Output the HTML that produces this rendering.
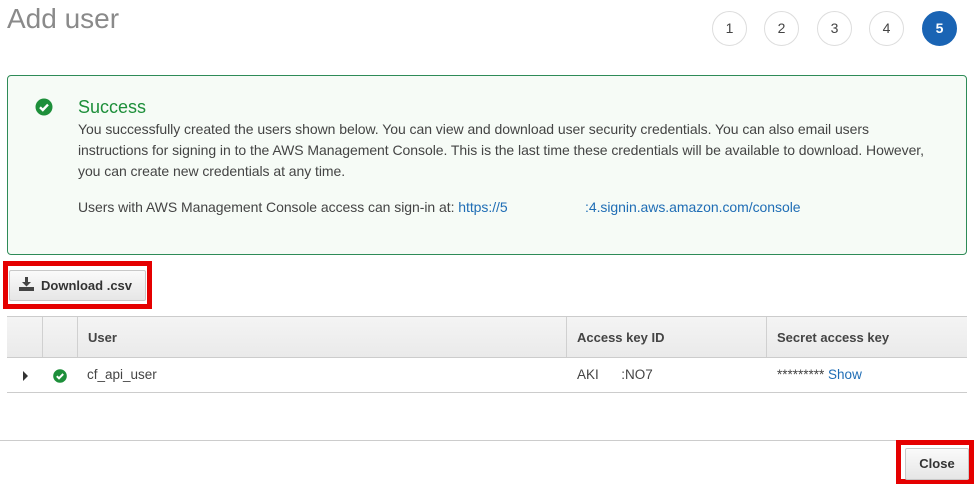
<!DOCTYPE html>
<html><head><meta charset="utf-8"><style>
*{box-sizing:border-box;margin:0;padding:0}
body{width:974px;height:487px;background:#fff;font-family:"Liberation Sans",Arial,sans-serif;color:#444;position:relative;overflow:hidden}
.abs{position:absolute}
h1{position:absolute;left:7px;top:3px;font-size:28px;font-weight:normal;color:#8a8a8a}
.c{position:absolute;top:11px;width:35px;height:35px;border-radius:50%;border:1px solid #ddd;text-align:center;line-height:33px;font-size:14px;color:#444}
.c.on{background:#1a64b4;border-color:#1a64b4;color:#fff;font-weight:bold}
.box{left:7px;top:75px;width:960px;height:180px;border:1px solid #2e8b57;border-radius:4px;background:#f6fbf6}
.t{position:absolute;left:78px;font-size:13px;color:#444;white-space:nowrap}
.m{font-size:14px;letter-spacing:-0.05px}
a{color:#1f6db5;text-decoration:none}
.btn{position:absolute;border:1px solid #c8c8c8;border-radius:2px;background:linear-gradient(#fafafa,#e6e6e6);font-weight:bold;font-size:13px;color:#333}
.red{position:absolute;border:5px solid #e50000}
.th{position:absolute;top:316px;height:42px;background:linear-gradient(#f4f4f4,#eaeaea);border-top:1px solid #ccc;border-bottom:1px solid #ccc}
.hd{position:absolute;top:330px;font-size:13px;font-weight:bold;color:#444}
.vl{position:absolute;top:317px;height:40px;width:1px;background:#d0d0d0}
</style></head><body>
<h1>Add user</h1>
<div class="c" style="left:712px">1</div>
<div class="c" style="left:764px">2</div>
<div class="c" style="left:817px">3</div>
<div class="c" style="left:869px">4</div>
<div class="c on" style="left:922px">5</div>
<div class="abs box"></div>
<svg class="abs" style="left:35px;top:98px" width="18" height="18" viewBox="0 0 18 18"><circle cx="9" cy="9" r="8.5" fill="#1d8f3a"/><path d="M5 9.3l2.8 2.7L13 6.6" stroke="#fff" stroke-width="2.4" fill="none"/></svg>
<div class="t" style="top:97px;font-size:18px;color:#1d8f3a">Success</div>
<div class="t m" style="top:121px">You successfully created the users shown below. You can view and download user security credentials. You can also email users</div>
<div class="t m" style="top:142px">instructions for signing in to the AWS Management Console. This is the last time these credentials will be available to download. However,</div>
<div class="t m" style="top:163px">you can create new credentials at any time.</div>
<div class="t m" style="top:199px">Users with AWS Management Console access can sign-in at: <a>https://5</a></div>
<div class="t m" style="top:199px;left:585px"><a>:4.signin.aws.amazon.com/console</a></div>
<div class="red" style="left:3px;top:261px;width:149px;height:48px"></div>
<div class="btn" style="left:9px;top:270px;width:137px;height:31px;line-height:29px;padding-left:31px">Download .csv</div>
<svg class="abs" style="left:19px;top:277px" width="16" height="14" viewBox="0 0 16 14"><path d="M6 0h3v5h3l-4.5 4.5L3 5h3z" fill="#444"/><rect x="0" y="10" width="15" height="4" fill="#444"/></svg>
<div class="th" style="left:7px;width:960px"></div>
<div class="vl" style="left:42px"></div><div class="vl" style="left:77px"></div><div class="vl" style="left:566px"></div><div class="vl" style="left:766px"></div>
<div class="hd" style="left:88px">User</div>
<div class="hd" style="left:577px">Access key ID</div>
<div class="hd" style="left:777px">Secret access key</div>
<div class="abs" style="left:23px;top:371px;width:0;height:0;border-left:5px solid #333;border-top:5px solid transparent;border-bottom:5px solid transparent"></div>
<svg class="abs" style="left:53px;top:369px" width="14" height="14" viewBox="0 0 14 14"><circle cx="7" cy="7" r="6.8" fill="#1d8f3a"/><path d="M3.8 7.2l2.2 2.1L10.2 5" stroke="#fff" stroke-width="2" fill="none"/></svg>
<div class="t" style="left:87px;top:367px;font-size:13.5px">cf_api_user</div>
<div class="t" style="left:577px;top:367px;font-size:13.5px">AKI&nbsp;&nbsp;&nbsp;&nbsp;&nbsp;&nbsp;:NO7</div>
<div class="t" style="left:777px;top:367px;font-size:13.5px">********* <a>Show</a></div>
<div class="abs" style="left:7px;top:392px;width:960px;height:1px;background:#ccc"></div>
<div class="abs" style="left:0;top:440px;width:974px;height:1px;background:#ccc"></div>
<div class="red" style="left:896px;top:440px;width:78px;height:44px"></div>
<div class="btn" style="left:905px;top:448px;width:64px;height:32px;line-height:30px;text-align:center">Close</div>
</body></html>
